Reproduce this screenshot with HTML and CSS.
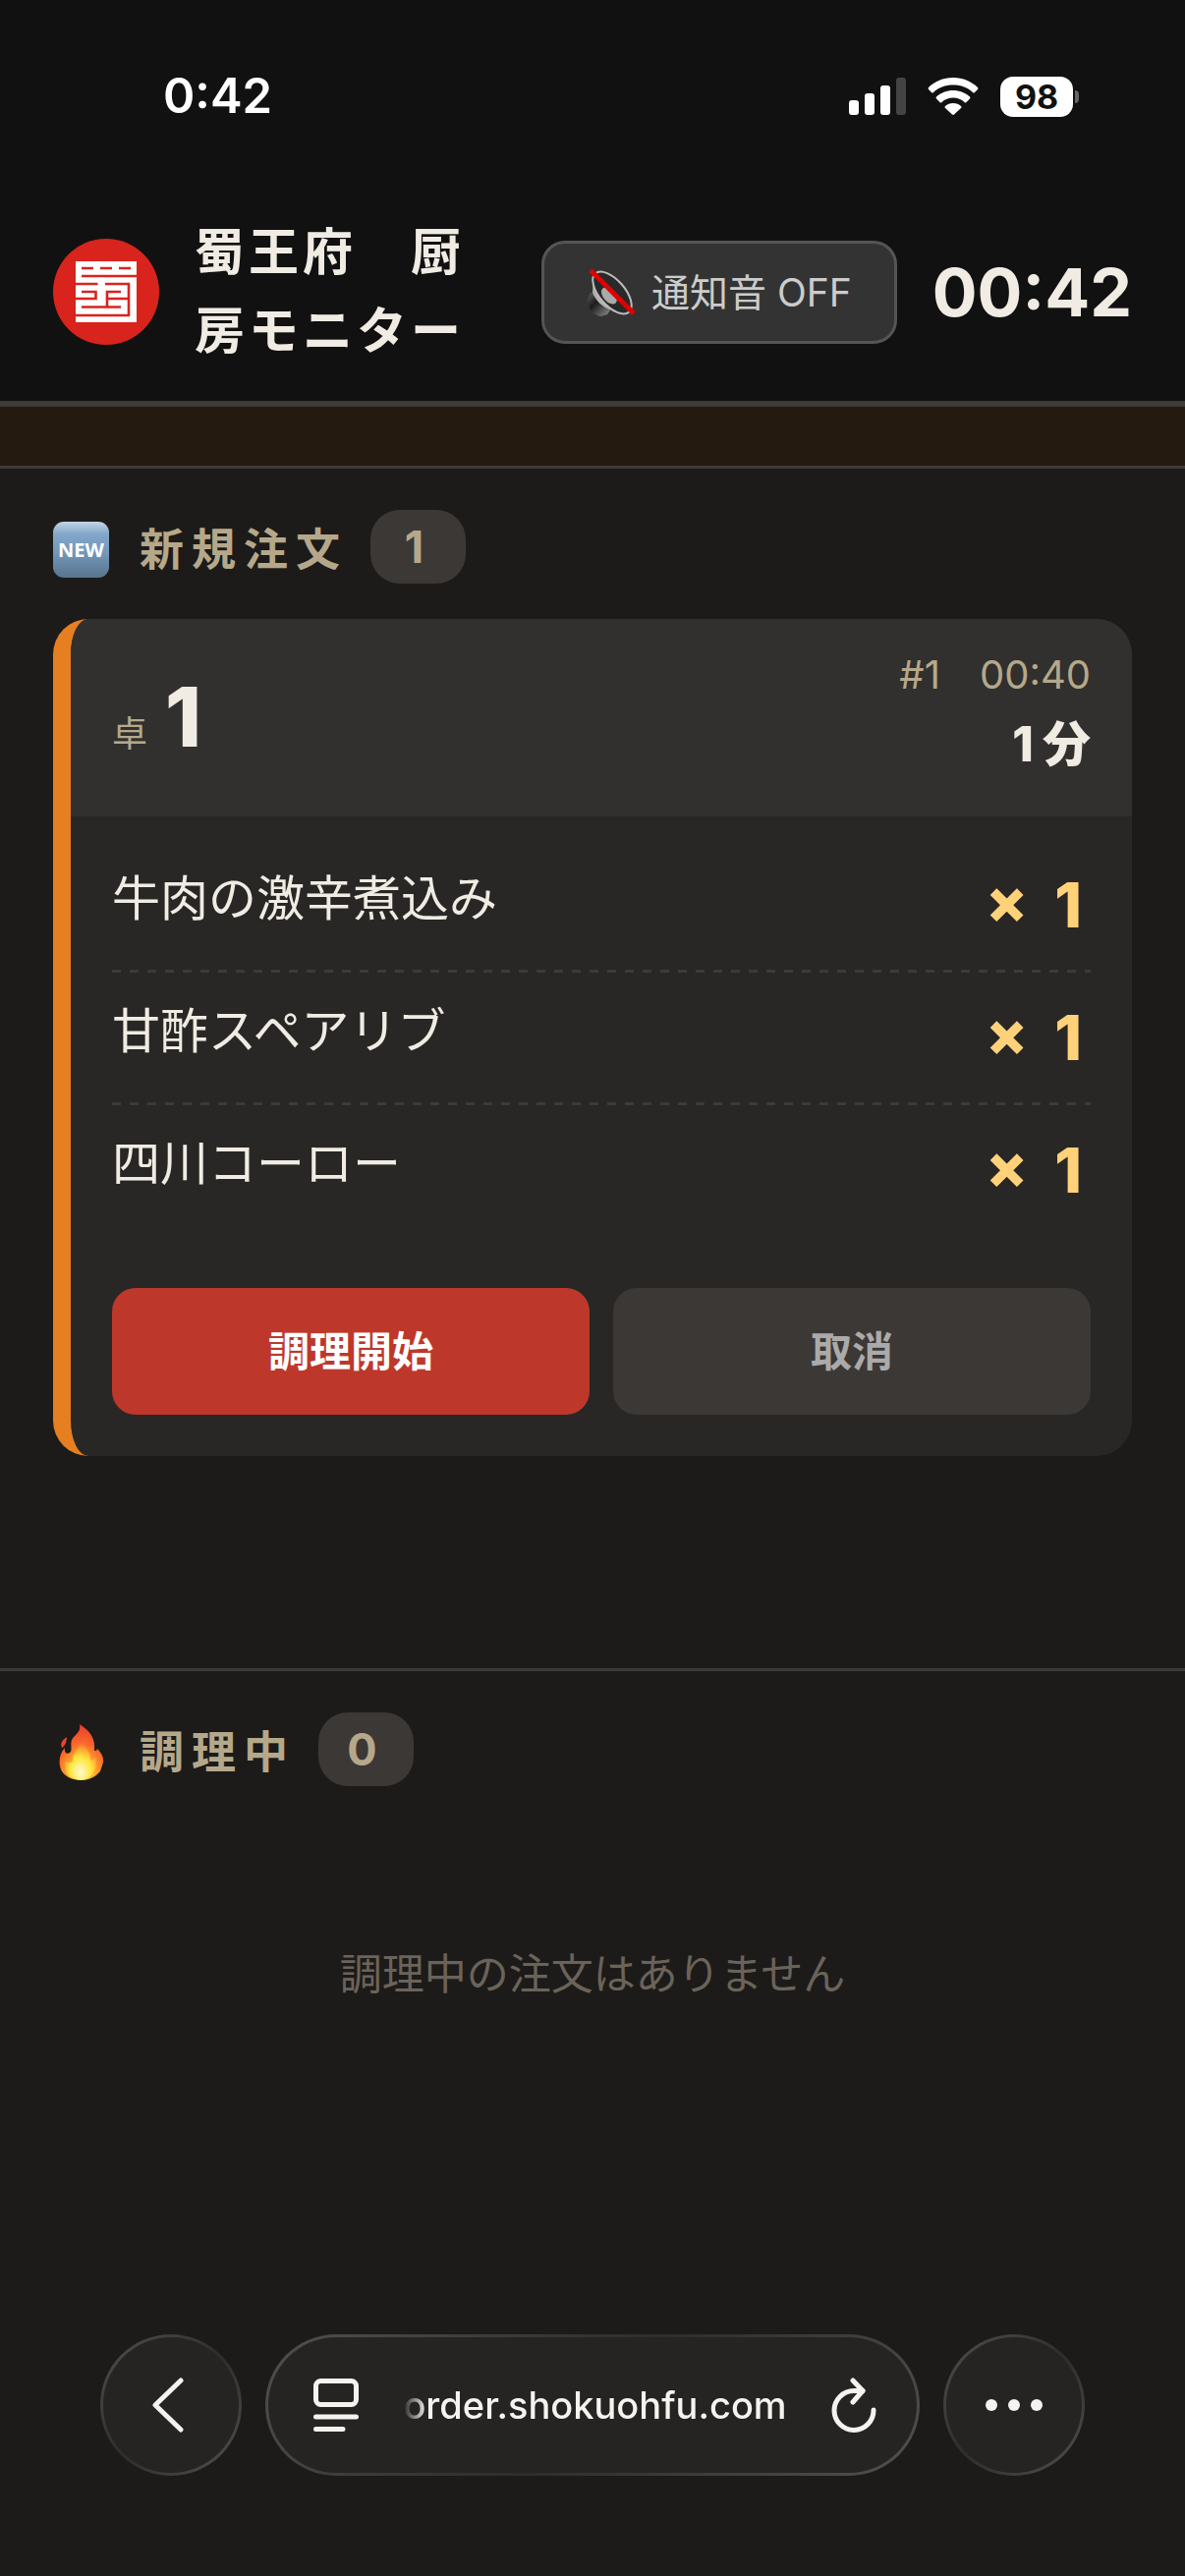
FILE: index.html
```
<!DOCTYPE html>
<html lang="ja">
<head>
  <meta charset="UTF-8">
  <meta name="viewport" content="width=device-width, initial-scale=1.0">
  <title>蜀王府　厨房モニター</title>
  <link rel="stylesheet" href="styles.css">
</head>
<body>
  <div class="status-bar">
    <span class="status-time">0:42</span>
    <div class="status-icons">
      <svg width="58" height="38" viewBox="0 0 58 38" fill="#fff">
        <rect x="0" y="23" width="10" height="15" rx="3"/>
        <rect x="16" y="16" width="10" height="22" rx="3"/>
        <rect x="32" y="8" width="10" height="30" rx="3"/>
        <rect x="48" y="0" width="10" height="38" rx="3" fill="#444"/>
      </svg>
      <svg width="52" height="38" viewBox="0 0 52 38" fill="#fff">
        <path d="M26 0C16 0 7 4 1 10Q0 11 1 12L4 15Q5 16 6 15C11 10 18 7.500 26 7.500S41 10 46 15Q47 16 48 15L51 12Q52 11 51 10C45 4 36 0 26 0Z"/>
        <path d="M26 13C19.500 13 13.500 15.500 9 19.500Q8 20.500 9 21.500L12.500 25Q13.500 26 14.500 25C17.500 22 21.500 20.500 26 20.500S34.500 22 37.500 25Q38.500 26 39.500 25L43 21.500Q44 20.500 43 19.500C38.500 15.500 32.500 13 26 13Z"/>
        <path d="M26 26C22.800 26 20 27 18 29Q17 30 18 31L25 37.500Q26 38.300 27 37.500L34 31Q35 30 34 29C32 27 29.200 26 26 26Z"/>
      </svg>
      <span class="battery">98</span>
    </div>
  </div>

  <header class="header">
    <svg class="logo" width="108" height="108" viewBox="0 0 108 108">
      <circle cx="54" cy="54" r="54" fill="#d9231d"/>
      <rect x="23" y="23" width="62" height="62" fill="#fff"/>
      <g fill="none" stroke="#d9231d" stroke-width="2.600">
        <path d="M29 30H41M48 30H60M67 30H79"/>
        <path d="M29 38H85"/>
        <path d="M23 46H45.500M53 46H77V78H23"/>
        <path d="M29 54H43.500V61H23"/>
        <path d="M69 54H55V69.500M55 61H77"/>
        <path d="M29 69.500H69"/>
      </g>
    </svg>
    <h1 class="title">蜀王府　厨房モニター</h1>
    <button class="sound-btn" type="button">
      <!-- ミュート中のスピーカー -->
      <svg width="51" height="51" viewBox="0 0 51 51">
        <defs>
          <linearGradient id="cone" x1="0" y1="1" x2="1" y2="0">
            <stop offset="0" stop-color="#eee"/>
            <stop offset=".5" stop-color="#777"/>
            <stop offset="1" stop-color="#222"/>
          </linearGradient>
          <linearGradient id="magnet" x1="0" y1="0" x2="1" y2="1">
            <stop offset="0" stop-color="#666"/>
            <stop offset=".4" stop-color="#1c1c1c"/>
            <stop offset="1" stop-color="#999"/>
          </linearGradient>
        </defs>
        <path d="M4 26L1 32C0 40 7 50 15 50L21 48L26 41L12 24Z" fill="url(#magnet)"/>
        <path d="M7 6L6 26C9 33 16 41 24 43L43 46Z" fill="url(#cone)"/>
        <ellipse cx="26" cy="26" rx="26" ry="13" transform="rotate(49 26 26)" fill="#292929" stroke="#bbb" stroke-width="2"/>
        <ellipse cx="23" cy="29" rx="10" ry="6" transform="rotate(49 23 29)" fill="#aaa"/>
        <path d="M4 3L48 47" stroke="#e00000" stroke-width="5"/>
      </svg>
      通知音 OFF
    </button>
    <time class="clock">00:42</time>
  </header>
  <div class="notice"></div>

  <main class="board">
    <section class="column column-new">
      <h2 class="column-title">
        <span class="icon-new">NEW</span>
        新規注文
        <span class="count">1</span>
      </h2>
      <article class="card">
        <div class="card-head">
          <div class="table-no"><span class="table-label">卓</span>1</div>
          <div class="meta">
            <div class="order-no">#1　00:40</div>
            <div class="elapsed"><span class="minutes">1</span>分</div>
          </div>
        </div>
        <ul class="items">
          <li><span class="name">牛肉の激辛煮込み</span><span class="qty"><span>×</span><span>1</span></span></li>
          <li><span class="name">甘酢スペアリブ</span><span class="qty"><span>×</span><span>1</span></span></li>
          <li><span class="name">四川コーロー</span><span class="qty"><span>×</span><span>1</span></span></li>
        </ul>
        <div class="actions">
          <button class="btn btn-start" type="button">調理開始</button>
          <button class="btn btn-cancel" type="button">取消</button>
        </div>
      </article>
    </section>

    <section class="column">
      <h2 class="column-title">
        <svg width="57" height="57" viewBox="0 0 57 57">
          <defs>
            <radialGradient id="fire" cx=".5" cy=".9" r=".85">
              <stop offset="0" stop-color="#ffe93b"/>
              <stop offset=".35" stop-color="#ffae2b"/>
              <stop offset=".65" stop-color="#fb6a2c"/>
              <stop offset="1" stop-color="#e8432c"/>
            </radialGradient>
            <radialGradient id="core" cx=".5" cy=".8" r=".7">
              <stop offset="0" stop-color="#fffbd0"/>
              <stop offset=".5" stop-color="#ffe53b"/>
              <stop offset="1" stop-color="#ffb13b" stop-opacity="0"/>
            </radialGradient>
          </defs>
          <path d="M27 0C38 7 43 15 42 25C42 28 44 28 45 25C48 28 52 33 51 39L48 48C43 54 36 57 28 57C20 57 12 53 9 48C5 41 6 30 12 24C11 29 14 31 17 29C21 26 15 18 22 12C26 8 28 6 27 0Z" fill="url(#fire)"/>
          <path d="M14 13C9 16 7 20 9 24C12 22 14 18 14 13Z" fill="#e8432c"/>
          <path d="M29 14C30 22 39 27 38 36C40 37 42 36 43 34C46 43 41 56 28 57C15 56 10 46 13 37C15 40 18 40 20 37C18 29 28 25 29 14Z" fill="url(#core)"/>
        </svg>
        調理中
        <span class="count">0</span>
      </h2>
      <p class="empty">調理中の注文はありません</p>
    </section>
  </main>

  <nav class="browser-bar">
    <button class="glass round" type="button" aria-label="戻る">
      <svg width="38" height="58" viewBox="0 0 38 58" fill="none" stroke="#f5f3f0" stroke-width="5" stroke-linecap="round" stroke-linejoin="round">
        <path d="M29 4L3 29L29 54"/>
      </svg>
    </button>
    <div class="glass address">
      <svg width="46" height="54" viewBox="0 0 46 54" fill="none" stroke="#f5f3f0" stroke-width="5" stroke-linecap="round">
        <rect x="2.500" y="2.500" width="41" height="24" rx="5"/>
        <path d="M2.500 39H43.500M2.500 51.500H30"/>
      </svg>
      <a class="url" href="#">order.shokuohfu.com</a>
      <button class="reload" type="button" aria-label="再読み込み">
        <svg width="46" height="56" viewBox="0 0 46 56" fill="none" stroke="#f5f3f0" stroke-width="5" stroke-linecap="round" stroke-linejoin="round">
          <path d="M32 13.500H23A20 20 0 1 0 43 33"/>
          <path d="M22 3L32 13.500L22 25"/>
        </svg>
      </button>
    </div>
    <button class="glass round" type="button" aria-label="メニュー">
      <svg width="60" height="14" viewBox="0 0 60 14" fill="#f5f3f0">
        <circle cx="7" cy="7" r="6"/>
        <circle cx="30" cy="7" r="6"/>
        <circle cx="53" cy="7" r="6"/>
      </svg>
    </button>
  </nav>
</body>
</html>
```

FILE: styles.css
```
* {
  box-sizing: border-box;
  margin: 0;
  padding: 0;
}
body {
  display: flex;
  flex-direction: column;
  min-height: 100vh;
  color: #f0ebe3;
  background: #1c1b19;
  font-family: Inter, "Noto Sans CJK JP", sans-serif;
}
button {
  border: none;
  cursor: pointer;
  font-family: inherit;
}
svg {
  display: block;
  flex-shrink: 0;
}

/* ステータスバー */
.status-bar {
  display: flex;
  justify-content: space-between;
  align-items: center;
  padding: 68px 114px 58px 166px;
  color: #fff;
  background: #111;
}
.status-time {
  font-size: 49px;
  font-weight: 600;
  line-height: 60px;
}
.status-icons {
  display: flex;
  align-items: center;
  gap: 22px;
}
.battery {
  position: relative;
  width: 74px;
  border-radius: 13px;
  font-size: 34px;
  font-weight: 700;
  line-height: 41px;
  text-align: center;
  color: #111;
  background: #fff;
}
.battery::after {
  content: "";
  position: absolute;
  top: 14px;
  right: -6px;
  width: 4px;
  height: 13px;
  border-radius: 0 4px 4px 0;
  background: #666;
}

/* ヘッダー */
.header {
  display: flex;
  align-items: center;
  gap: 36px;
  padding: 30px 54px;
  border-bottom: 6px solid #3d3a37;
  background: #111;
}
.title {
  flex: 1;
  font-size: 51px;
  font-weight: 700;
  letter-spacing: 4px;
  line-height: 80px;
}
.sound-btn {
  display: flex;
  align-items: center;
  gap: 15px;
  padding: 21px 43px;
  border: 3px solid #555;
  border-radius: 24px;
  font-size: 39px;
  line-height: 57px;
  white-space: nowrap;
  color: #ccc;
  background: #333;
}
.clock {
  font-size: 68px;
  font-weight: 700;
  line-height: 162px;
}
.notice {
  height: 63px;
  border-bottom: 3px solid #3d3a37;
  background: #241a10;
}

/* 注文カラム */
.column {
  padding: 42px 54px;
}
.column-new {
  padding-bottom: 216px;
  border-bottom: 3px solid #3d3a37;
}
.column-title {
  display: flex;
  align-items: center;
  font-size: 45px;
  font-weight: 700;
  letter-spacing: 8px;
  line-height: 81px;
  color: #b5a88a;
}
.column-title svg,
.icon-new {
  margin-right: 31px;
}
.icon-new {
  width: 57px;
  border-radius: 11px;
  font-family: "Open Sans", sans-serif;
  font-size: 20px;
  letter-spacing: 0;
  line-height: 57px;
  text-align: center;
  color: #fff;
  background: linear-gradient(#c3d6e6, #83a7c8 22%, #7398bb 55%, #58748d);
}
.count {
  align-self: flex-start;
  margin-left: 23px;
  border-radius: 30px;
  min-width: 97px;
  line-height: 75px;
  text-align: center;
  background: #3c3835;
}

/* 注文カード */
.card {
  overflow: hidden;
  margin-top: 30px;
  border-left: 18px solid #e67e22;
  border-radius: 36px;
  background: #282725;
}
.card-head {
  display: flex;
  justify-content: space-between;
  align-items: flex-end;
  padding: 24px 42px 36px;
  background: #31302e;
}
.table-no {
  font-size: 84px;
  font-weight: 800;
  line-height: 96px;
}
.table-label {
  margin-right: 18px;
  font-size: 36px;
  font-weight: 400;
  color: #b5a88a;
}
.meta {
  text-align: right;
}
.order-no {
  font-size: 40px;
  line-height: 66px;
  color: #b5a88a;
}
.elapsed {
  font-size: 49px;
  font-weight: 800;
  line-height: 75px;
}
.minutes {
  margin-right: 9px;
}
.items {
  padding: 24px 42px;
  list-style: none;
}
.items li {
  display: flex;
  justify-content: space-between;
}
.items li + li {
  padding-top: 3px;
  background: repeating-linear-gradient(90deg, #3d3a37 0 9px, transparent 9px 18px) top / 100% 3px no-repeat;
}
.name {
  font-size: 49px;
  line-height: 120px;
}
.qty {
  display: flex;
  gap: 27px;
  padding-right: 9px;
  font-size: 63px;
  font-weight: 800;
  font-feature-settings: "case";
  line-height: 132px;
  color: #ffd27a;
}
.actions {
  display: flex;
  gap: 24px;
  padding: 30px 42px 42px;
}
.btn {
  flex: 1;
  border-radius: 24px;
  font-size: 42px;
  font-weight: 700;
  line-height: 129px;
}
.btn-start {
  color: #fff;
  background: #bd382b;
}
.btn-cancel {
  color: #aaa;
  background: #3c3835;
}
.empty {
  padding: 146px 0;
  font-size: 43px;
  line-height: 78px;
  text-align: center;
  color: #6b635a;
}

/* ブラウザ下部バー */
.browser-bar {
  display: flex;
  gap: 24px;
  margin-top: auto;
  padding: 0 102px 102px;
}
.glass {
  display: flex;
  align-items: center;
  justify-content: center;
  height: 144px;
  border: 3px solid transparent;
  border-radius: 72px;
  background:
    linear-gradient(#252422, #252422) padding-box,
    linear-gradient(135deg, #52504d, #2e2d2b 50%, #52504d) border-box;
}
.round {
  flex: 0 0 144px;
}
.address {
  flex: 1;
  justify-content: space-between;
  padding: 0 41px 0 46px;
}
.url {
  font-size: 38px;
  font-weight: 500;
  text-decoration: none;
  color: #f5f3f0;
  -webkit-mask-image: linear-gradient(90deg, transparent, #000 24px);
  mask-image: linear-gradient(90deg, transparent, #000 24px);
}
.reload {
  background: none;
}
```
